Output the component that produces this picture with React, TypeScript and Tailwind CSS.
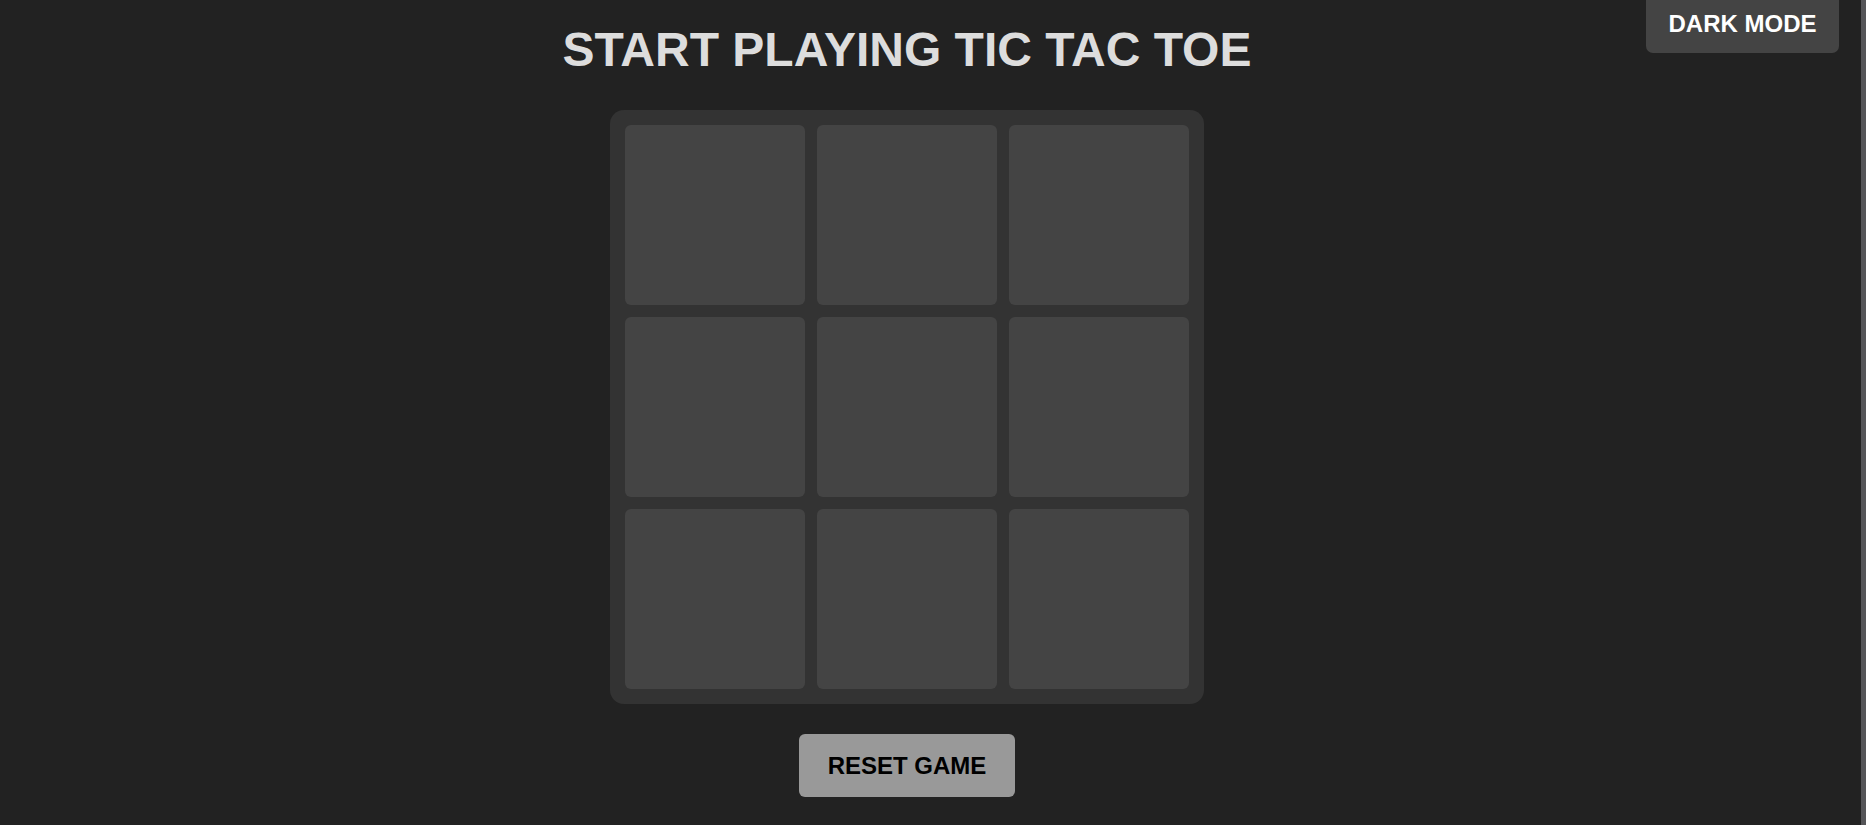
import { useState } from "react";

type Cell = "X" | "O" | null;

const FONT = "font-['Liberation_Sans',Arial,Helvetica,sans-serif]";

export default function App() {
  const [cells, setCells] = useState<Cell[]>(Array(9).fill(null));
  const [xNext, setXNext] = useState(true);

  const play = (i: number) => {
    if (cells[i]) return;
    const next = cells.slice();
    next[i] = xNext ? "X" : "O";
    setCells(next);
    setXNext(!xNext);
  };

  const reset = () => {
    setCells(Array(9).fill(null));
    setXNext(true);
  };

  return (
    <div className={`relative flex min-h-[825px] w-full bg-[#222222] ${FONT}`}>
      {/* Main column: centred content, shifted left like the original page */}
      <main className="flex flex-1 flex-col items-center pr-[47px]">
        <h1 className="mt-[22px] text-[48px] font-bold leading-[55px] text-[#dddddd]">
          START PLAYING TIC TAC TOE
        </h1>

        <div className="mt-[33px] grid grid-cols-[repeat(3,180px)] grid-rows-[repeat(3,180px)] gap-[12px] rounded-[14px] bg-[#333333] p-[15px]">
          {cells.map((cell, i) => (
            <button
              key={i}
              onClick={() => play(i)}
              className="flex items-center justify-center rounded-[6px] bg-[#444444] text-[96px] font-bold text-[#dddddd]"
            >
              {cell}
            </button>
          ))}
        </div>

        <button
          onClick={reset}
          className="mt-[30px] flex h-[63px] w-[216px] items-center justify-center rounded-[6px] bg-[#999999] text-[24px] font-bold leading-[28px] text-black"
        >
          RESET GAME
        </button>
      </main>

      {/* Thin strip on the right edge */}
      <div className="w-[5px] bg-[#555558]" />

      {/* Theme toggle pinned top-right */}
      <button className="absolute right-[27px] top-0 flex h-[53px] w-[193px] items-start justify-center rounded-b-[7px] bg-[#444444] pt-[10px] text-[24px] font-bold leading-[28px] text-white">
        DARK MODE
      </button>
    </div>
  );
}
